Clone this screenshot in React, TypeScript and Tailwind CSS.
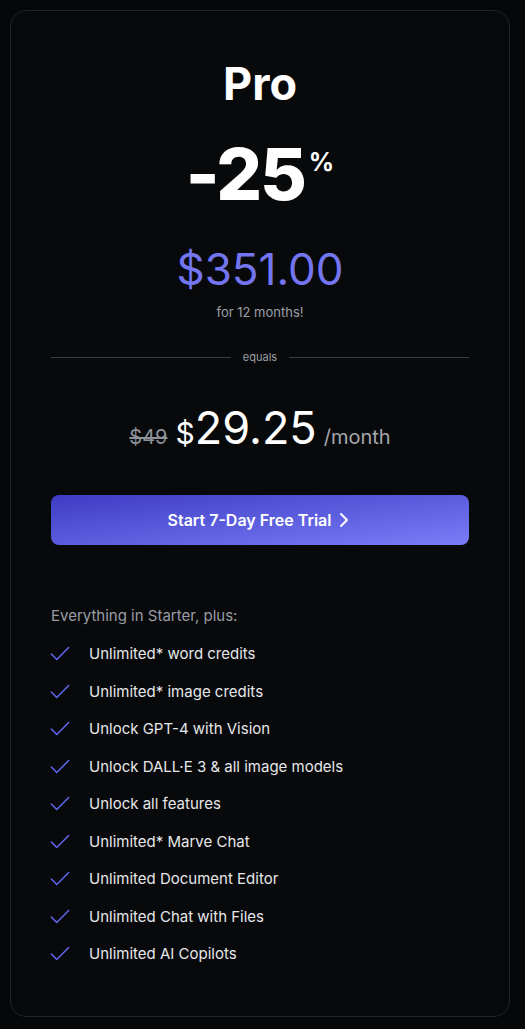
import { Check, ChevronRight } from 'lucide-react'

const FEATURES = [
  'Unlimited* word credits',
  'Unlimited* image credits',
  'Unlock GPT-4 with Vision',
  'Unlock DALL·E 3 & all image models',
  'Unlock all features',
  'Unlimited* Marve Chat',
  'Unlimited Document Editor',
  'Unlimited Chat with Files',
  'Unlimited AI Copilots',
]

export default function App() {
  return (
    <div
      className="min-h-[1029px] w-[525px] bg-[#060709] pt-[10px] pl-[10px]"
      style={{ fontFamily: 'Inter, "Noto Sans", sans-serif' }}
    >
      <div className="flex h-[1007px] w-[500px] flex-col rounded-2xl border border-[#222327] bg-[#08090b] px-10 pt-10">
        <h2 className="mt-[10px] text-center text-[45px] font-bold leading-none text-white">Pro</h2>

        <div className="mt-[32px] flex justify-center text-white">
          <span className="text-[72px] font-extrabold leading-none tracking-[-0.03em]">-25</span>
          <span className="mt-[12px] ml-[4px] text-[25px] font-bold leading-none">%</span>
        </div>

        <p className="mt-[37px] text-center text-[44px] leading-none text-[#7475f0]">$351.00</p>
        <p className="mt-[15px] text-center text-[13px] leading-none text-[#9ca0a8]">for 12 months!</p>

        <div className="mt-[32px] flex items-center gap-3">
          <div className="h-px flex-1 bg-[#3c3d42]" />
          <span className="text-[11px] leading-3 text-[#9ca0a8]">equals</span>
          <div className="h-px flex-1 bg-[#3c3d42]" />
        </div>

        <div className="mt-[42px] flex items-baseline justify-center text-white">
          <span className="mr-2 text-[20px] text-[#8e9199] line-through">$49</span>
          <span className="text-[30px]">$</span>
          <span className="text-[45px] leading-none">29.25</span>
          <span className="ml-[7px] text-[20px] text-[#a4a7ae]">/month</span>
        </div>

        <button
          type="button"
          className="mt-[39px] flex h-[50px] w-full items-center justify-center rounded-lg bg-linear-to-br from-[#3f3bc3] to-[#7a7cf7] pl-[4px] text-[16px] font-semibold text-white"
        >
          Start 7-Day Free Trial
          <ChevronRight size={24} strokeWidth={2} className="ml-[1px]" />
        </button>

        <p className="mt-[59px] text-[15px] leading-6 text-[#9a9da5]">Everything in Starter, plus:</p>

        <ul className="mt-[7.5px] flex flex-col">
          {FEATURES.map((f) => (
            <li key={f} className="flex h-[37.5px] items-center gap-[16px] text-[15px] text-[#e6e7ea]">
              <Check size={26} strokeWidth={1.4} className="-ml-[4px] text-[#6366f1]" />
              <span>{f}</span>
            </li>
          ))}
        </ul>
      </div>
    </div>
  )
}
